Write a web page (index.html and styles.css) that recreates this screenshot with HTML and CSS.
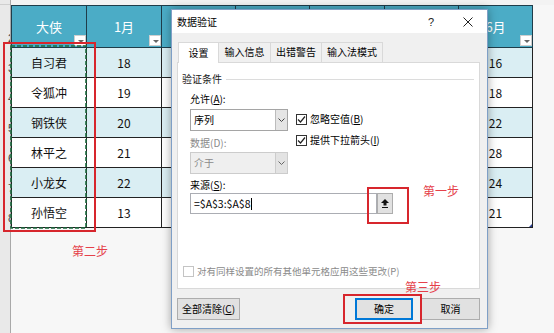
FILE: index.html
```html
<!DOCTYPE html>
<html lang="zh-CN">
<head>
    <meta charset="UTF-8">
    <meta name="viewport" content="width=device-width, initial-scale=1.0">
    <title>数据验证</title>
    <link rel="stylesheet" href="styles.css">
</head>
<body>
<div class="screen">
    <!-- 行号 -->
    <div class="gutter">
        <div class="rn rn-top"></div>
        <div class="rn rn-head"><span>2</span></div>
        <div class="rn"><span>3</span></div>
        <div class="rn"><span>4</span></div>
        <div class="rn"><span>5</span></div>
        <div class="rn"><span>6</span></div>
        <div class="rn"><span>7</span></div>
        <div class="rn"><span>8</span></div>
    </div>

    <!-- 表格 -->
    <div class="sheet">
        <div class="sheet-top"></div>
        <table class="tbl">
            <colgroup>
                <col class="c75"><col class="c75"><col class="c74"><col class="c74"><col class="c75"><col class="c74"><col class="c74">
            </colgroup>
            <thead>
                <tr class="head">
                    <th>大侠<i class="dd"></i></th>
                    <th>1月<i class="dd"></i></th>
                    <th>2月<i class="dd"></i></th>
                    <th>3月<i class="dd"></i></th>
                    <th>4月<i class="dd"></i></th>
                    <th>5月<i class="dd"></i></th>
                    <th>6月<i class="dd"></i></th>
                </tr>
            </thead>
            <tbody>
                <tr><td class="name">自习君</td><td>18</td><td>20</td><td>15</td><td>22</td><td>19</td><td>16</td></tr>
                <tr><td class="name">令狐冲</td><td>19</td><td>17</td><td>21</td><td>18</td><td>20</td><td>18</td></tr>
                <tr><td class="name">钢铁侠</td><td>20</td><td>23</td><td>19</td><td>25</td><td>21</td><td>22</td></tr>
                <tr><td class="name">林平之</td><td>21</td><td>16</td><td>24</td><td>20</td><td>26</td><td>28</td></tr>
                <tr><td class="name">小龙女</td><td>22</td><td>25</td><td>18</td><td>23</td><td>22</td><td>24</td></tr>
                <tr><td class="name">孙悟空</td><td>13</td><td>19</td><td>22</td><td>17</td><td>15</td><td>21<i class="grip"></i></td></tr>
            </tbody>
        </table>
    </div>

    <!-- 复制区域的虚线框 -->
    <svg class="ants" width="77" height="184" viewBox="0 0 77 184">
        <rect x="1" y="1" width="75" height="182" fill="none" stroke="#1d6b3f" stroke-width="1.6" stroke-dasharray="4 2"/>
    </svg>

    <!-- 数据验证对话框 -->
    <div class="dlg">
        <div class="dlg-title">
            <span class="dlg-name">数据验证</span>
            <span class="dlg-help">?</span>
            <span class="dlg-close">
                <svg width="10" height="10" viewBox="0 0 10 10"><path d="M0.5 0.5 L9.5 9.5 M9.5 0.5 L0.5 9.5" stroke="#222" stroke-width="1" fill="none"/></svg>
            </span>
        </div>
        <div class="dlg-body">
            <div class="tabs">
                <div class="tab active">设置</div>
                <div class="tab w52">输入信息</div>
                <div class="tab w51">出错警告</div>
                <div class="tab w61">输入法模式</div>
            </div>
            <div class="panel">
                <div class="group-title">验证条件</div>
                <div class="cond">
                    <div class="cond-left">
                        <div class="lbl">允许(<u>A</u>):</div>
                        <div class="combo">
                            <span class="combo-text">序列</span>
                            <span class="combo-btn"><svg width="7" height="4" viewBox="0 0 7 4"><path d="M0.5 0.5 L3.5 3.5 L6.5 0.5" stroke="#444" fill="none"/></svg></span>
                        </div>
                        <div class="lbl dis gap-top">数据(D):</div>
                        <div class="combo dis">
                            <span class="combo-text">介于</span>
                            <span class="combo-btn"><svg width="7" height="4" viewBox="0 0 7 4"><path d="M0.5 0.5 L3.5 3.5 L6.5 0.5" stroke="#666" fill="none"/></svg></span>
                        </div>
                    </div>
                    <div class="cond-right">
                        <div class="chk">
                            <span class="box"><svg width="9" height="9" viewBox="0 0 9 9"><path d="M1 4.5 L3.5 7 L8 1.5" stroke="#222" stroke-width="1.2" fill="none"/></svg></span>
                            忽略空值(<u>B</u>)
                        </div>
                        <div class="chk">
                            <span class="box"><svg width="9" height="9" viewBox="0 0 9 9"><path d="M1 4.5 L3.5 7 L8 1.5" stroke="#222" stroke-width="1.2" fill="none"/></svg></span>
                            提供下拉箭头(<u>I</u>)
                        </div>
                    </div>
                </div>
                <div class="lbl src-lbl">来源(<u>S</u>):</div>
                <div class="source">
                    <div class="source-input">=$A$3:$A$8<span class="caret"></span></div>
                    <div class="source-btn">
                        <svg width="8" height="9" viewBox="0 0 8 9"><path d="M4 0 L8 4 L5.5 4 L5.5 6.5 L2.5 6.5 L2.5 4 L0 4 Z" fill="#111"/><path d="M1 8.5 H7" stroke="#111" stroke-width="1"/></svg>
                    </div>
                </div>
                <div class="chk dis apply">
                    <span class="box"></span>
                    对有同样设置的所有其他单元格应用这些更改(P)
                </div>
            </div>
            <div class="btns">
                <div class="btn clear">全部清除(<u>C</u>)</div>
                <div class="btn ok">确定</div>
                <div class="btn cancel">取消</div>
            </div>
        </div>
    </div>

    <!-- 红色标注 -->
    <div class="mark mark-col"></div>
    <div class="mark mark-btn"></div>
    <div class="mark mark-ok"></div>
    <div class="note note-1">第一步</div>
    <div class="note note-2">第二步</div>
    <div class="note note-3">第三步</div>
</div>
</body>
</html>
```

FILE: styles.css
```css
* { box-sizing: border-box; }
body { margin: 0; font-family: "Noto Sans CJK SC", "Noto Sans", sans-serif; }

.screen { position: relative; width: 554px; height: 333px; overflow: hidden; background: #f7f7f7; display: flex; }

/* 行号 */
.gutter { width: 11px; flex: none; background: #e9e9e9; border-right: 1px solid #a9a9a9; }
.rn { height: 30px; display: flex; justify-content: flex-end; align-items: flex-end; padding-bottom: 3px; overflow: hidden; font: 11px "Liberation Sans", sans-serif; color: #444; }
.rn span { margin-right: -4px; }
.rn-top { height: 5px; padding: 0; border-bottom: 1px solid #cfcfcf; }
.rn-head { height: 42px; }

/* 表格 */
.sheet { flex: 1; }
.sheet-top { height: 5px; background: #f3f3f3; }
.tbl { border-collapse: collapse; table-layout: fixed; width: 521px; }
.c75 { width: 75px; }
.c74 { width: 74px; }
.tbl th, .tbl td { border: 1px solid #222; padding: 0; text-align: center; }
.tbl tr { height: 30px; }
.tbl tr.head { height: 42px; }
.tbl th { position: relative; background: #4bacc6; color: #fff; font-size: 13px; font-weight: normal; border-color: #1f3d4a; }
.tbl td { background: #fff; color: #111; font-size: 12px; }
.tbl tbody tr:nth-child(odd) td { background: #daeef3; }
.tbl td.name { font-size: 12px; }
.dd { position: absolute; right: 0; bottom: 1px; width: 12px; height: 11px; background: #fff; border: 1px solid #cfcfcf; }
.dd::after { content: ""; position: absolute; left: 3px; top: 4px; border-left: 3px solid transparent; border-right: 3px solid transparent; border-top: 3px solid #666; }
.tbl td:last-child { position: relative; }
.grip { position: absolute; right: 0; bottom: 0; border-left: 3px solid transparent; border-bottom: 3px solid #2a3f8f; }

.ants { position: absolute; left: 10px; top: 45px; }

/* 对话框 */
.dlg { position: absolute; left: 171px; top: 9px; width: 317px; height: 320px; border: 1px solid #7f9fc6; background: #f0f0f0; box-shadow: 0 0 9px rgba(0, 0, 0, 0.35); font-size: 10px; color: #000; display: flex; flex-direction: column; }
.dlg-title { height: 23px; background: #fff; display: flex; align-items: center; padding-left: 5px; }
.dlg-name { flex: 1; }
.dlg-help { width: 36px; text-align: center; font: 11px "Liberation Sans", sans-serif; color: #222; }
.dlg-close { width: 38px; display: flex; justify-content: center; }
.dlg-body { flex: 1; padding: 8px 7px 0 5px; display: flex; flex-direction: column; }

.tabs { display: flex; align-items: flex-end; height: 21px; padding-left: 1px; }
.tab { height: 20px; line-height: 18px; text-align: center; border: 1px solid #d9d9d9; border-bottom: none; margin-left: -1px; background: #f0f0f0; }
.tab:first-child { margin-left: 0; }
.tab.active { width: 41px; height: 21px; line-height: 20px; background: #fff; margin-bottom: -1px; position: relative; z-index: 1; }
.w52 { width: 53px; }
.w51 { width: 52px; }
.w61 { width: 62px; }

.panel { height: 227px; background: #fff; border: 1px solid #d9d9d9; padding: 9px 5px 0 4px; display: flex; flex-direction: column; }
.group-title { display: flex; align-items: center; gap: 4px; line-height: 14px; color: #222; }
.group-title::after { content: ""; flex: 1; height: 1px; background: #dcdcdc; }

.lbl { line-height: 14px; margin-bottom: 3px; }
.lbl.dis { color: #8a8a8a; margin-bottom: 2px; }
.gap-top { margin-top: 5px; }
u { text-decoration: underline; }

.cond { display: flex; gap: 8px; margin: 6px 0 0 8px; }
.cond-left { width: 98px; }
.cond-right { padding-top: 19px; display: flex; flex-direction: column; gap: 5px; }

.combo { height: 22px; display: flex; border: 1px solid #a5a5a5; background: #fff; }
.combo-text { flex: 1; padding-left: 3px; line-height: 20px; }
.combo-btn { width: 12px; display: flex; align-items: center; justify-content: center; background: #e5e5e5; border-left: 1px solid #bcbcbc; }
.combo.dis { background: #efefef; border-color: #cccccc; color: #8a8a8a; }
.combo.dis .combo-btn { background: #e3e3e3; border-left-color: #cccccc; }

.chk { display: flex; align-items: center; line-height: 16px; }
.box { width: 11px; height: 11px; border: 1px solid #333; background: #fff; margin-right: 3px; display: flex; align-items: center; justify-content: center; }
.chk.dis { color: #8a8a8a; }
.chk.dis .box { border-color: #c4c4c4; }

.src-lbl { margin: 4px 0 1px 8px; }
.source { display: flex; margin-left: 8px; }
.source-input { width: 187px; height: 21px; border: 1px solid #abadb3; padding-left: 3px; display: flex; align-items: center; font-size: 10.5px; }
.caret { width: 1px; height: 12px; background: #000; margin-left: 1px; }
.source-btn { width: 16px; height: 21px; background: #e1e1e1; border: 1px solid #adadad; display: flex; align-items: center; justify-content: center; }

.apply { margin: auto 0 10px 1px; line-height: 14px; font-size: 9.5px; }

.btns { display: flex; gap: 8px; margin-top: 9px; }
.btn { height: 22px; line-height: 20px; text-align: center; background: #e1e1e1; border: 1px solid #adadad; }
.clear { width: 63px; margin-right: auto; }
.ok { width: 58px; border-color: #0078d7; box-shadow: inset 0 0 0 1px #0078d7; }
.cancel { width: 59px; }

/* 标注 */
.mark { position: absolute; border: 2px solid #d7262d; }
.mark-col { left: 3px; top: 42px; width: 93px; height: 190px; }
.mark-btn { left: 367px; top: 187px; width: 42px; height: 37px; }
.mark-ok { left: 343px; top: 294px; width: 79px; height: 30px; }
.note { position: absolute; color: #e5414a; font-size: 12px; line-height: 14px; }
.note-1 { left: 423px; top: 184px; }
.note-2 { left: 72px; top: 244px; }
.note-3 { left: 405px; top: 280px; }
```
